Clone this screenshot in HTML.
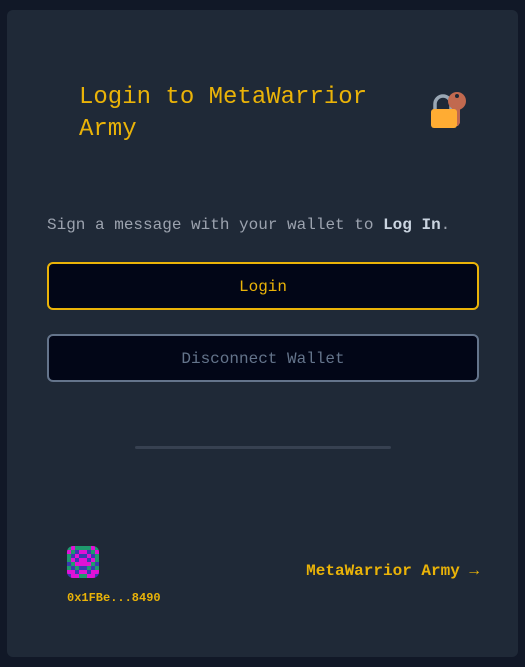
<!DOCTYPE html>
<html><head><style>
body{margin:0;width:525px;height:667px;background:#111827;font-family:"Liberation Mono",monospace;overflow:hidden}
.card{position:absolute;left:7px;top:10px;width:511px;height:647px;background:#1f2937;border-radius:6px}
.t{position:absolute;left:79px;top:82px;color:#eab308;font-size:24px;line-height:32px}
.s{position:absolute;left:47px;top:216px;color:#9ca3af;font-size:16px}
.s b{color:#cbd5e1}
.btn{position:absolute;left:47px;width:428px;height:44px;border:2px solid #eab308;border-radius:6px;background:#020617;color:#eab308;font-size:16px;text-align:center;line-height:46px}
.div{position:absolute;left:135px;top:446px;width:256px;height:3px;background:#374151;border-radius:2px}
.f{position:absolute;right:46px;top:562px;color:#eab308;font-weight:bold;font-size:16px}
.a{position:absolute;left:67px;top:591px;color:#eab308;font-weight:bold;font-size:12px}
.av{position:absolute;left:67px;top:546px;width:32px;height:32px;border-radius:6px;overflow:hidden;display:grid;grid-template-columns:repeat(8,4px)}
.av i{width:4px;height:4px}
.g{background:#1f9a6e}.m{background:#e012d6}.b{background:#3a3ab0}
</style></head><body>
<div class="card"></div>
<div class="t">Login to MetaWarrior<br>Army</div>
<svg style="position:absolute;left:428px;top:90px" width="40" height="40" viewBox="0 0 40 40">
<path d="M7 20V14a8 8 0 0 1 16 0v6" fill="none" stroke="#9aa7b4" stroke-width="3.5"/>
<path d="M24 14h8v19l-2 3h-3l-3-3z" fill="#c1694f"/>
<circle cx="29" cy="11" r="9" fill="#c1694f"/><circle cx="29" cy="6" r="2" fill="#1f2937"/>
<rect x="3" y="19" width="26" height="19" rx="3" fill="#ffac33"/>
</svg>
<div class="s">Sign a message with your wallet to <b>Log In</b>.</div>
<div class="btn" style="top:262px">Login</div>
<div class="btn" style="top:334px;border-color:#64748b;color:#64748b">Disconnect Wallet</div>
<div class="div"></div>
<div class="av">
<i class="g"></i><i class="m"></i><i class="g"></i><i class="g"></i><i class="g"></i><i class="g"></i><i class="m"></i><i class="g"></i>
<i class="m"></i><i class="g"></i><i class="b"></i><i class="m"></i><i class="m"></i><i class="b"></i><i class="g"></i><i class="m"></i>
<i class="g"></i><i class="b"></i><i class="m"></i><i class="b"></i><i class="b"></i><i class="m"></i><i class="b"></i><i class="g"></i>
<i class="g"></i><i class="m"></i><i class="b"></i><i class="m"></i><i class="m"></i><i class="b"></i><i class="m"></i><i class="g"></i>
<i class="b"></i><i class="g"></i><i class="m"></i><i class="m"></i><i class="m"></i><i class="m"></i><i class="g"></i><i class="b"></i>
<i class="g"></i><i class="b"></i><i class="g"></i><i class="b"></i><i class="b"></i><i class="g"></i><i class="b"></i><i class="g"></i>
<i class="m"></i><i class="m"></i><i class="b"></i><i class="m"></i><i class="m"></i><i class="b"></i><i class="m"></i><i class="m"></i>
<i class="b"></i><i class="m"></i><i class="m"></i><i class="g"></i><i class="g"></i><i class="m"></i><i class="m"></i><i class="b"></i>
</div>
<div class="a">0x1FBe...8490</div>
<div class="f">MetaWarrior Army →</div>
</body></html>
